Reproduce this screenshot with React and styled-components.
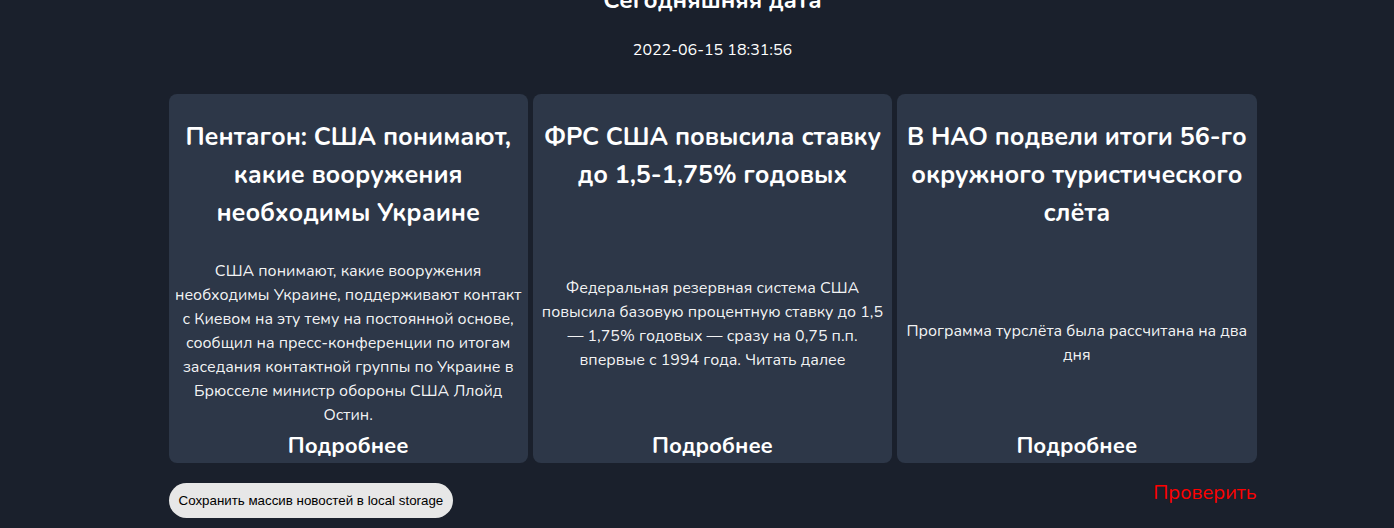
import React from "react";
import styled, { createGlobalStyle } from "styled-components";

const GlobalStyle = createGlobalStyle`
  *, *::before, *::after { box-sizing: border-box; }
  body {
    margin: 0;
    background: #1a202c;
    color: rgba(255, 255, 255, 0.96);
    font-family: Nunito, Lato, "Noto Sans", sans-serif;
    font-size: 16px;
    line-height: 24px;
  }
`;

const Page = styled.main`
  padding: 0 0 10px 31px;
`;

const Container = styled.div`
  width: 100%;
  max-width: 1088px;
  margin: 0 auto;
`;

const DateBlock = styled.header`
  margin-top: -18px;
  padding-bottom: 32px;
  text-align: center;
  color: #fff;
`;

const DateTitle = styled.h2`
  margin: 0 0 20px;
  font-size: 24px;
  line-height: 36px;
  font-weight: 700;
`;

const CurrentDate = styled.time`
  display: block;
`;

const NewsGrid = styled.section`
  display: grid;
  grid-template-columns: repeat(3, 1fr);
  gap: 5px;
`;

const NewsCard = styled.article`
  display: flex;
  flex-direction: column;
  justify-content: space-between;
  padding: 24px 5px 0;
  border-radius: 8px;
  background: #2d3748;
  text-align: center;
`;

const NewsTitle = styled.h2`
  margin: 0 0 27px;
  color: #fff;
  font-size: 25px;
  line-height: 38px;
  font-weight: 700;
`;

const NewsText = styled.p`
  margin: 0;
`;

const MoreLink = styled.a`
  padding-top: 2px;
  color: #fff;
  font-size: 22px;
  line-height: 34px;
  font-weight: 700;
  text-decoration: none;
`;

const Actions = styled.footer`
  display: flex;
  justify-content: space-between;
  align-items: flex-start;
  padding-top: 20px;
`;

const SaveButton = styled.button`
  height: 35px;
  padding: 0 10px;
  border: 0;
  border-radius: 18px;
  background: #e7e7e7;
  color: #000;
  font-family: "Liberation Sans", Arial, sans-serif;
  cursor: pointer;
`;

const CheckLink = styled.a`
  color: #ff0000;
  font-size: 20px;
  line-height: 20px;
  text-decoration: none;
`;

const news = [
  {
    title: "Пентагон: США понимают, какие вооружения необходимы Украине",
    text: "США понимают, какие вооружения необходимы Украине, поддерживают контакт с Киевом на эту тему на постоянной основе, сообщил на пресс-конференции по итогам заседания контактной группы по Украине в Брюсселе министр обороны США Ллойд Остин.",
  },
  {
    title: "ФРС США повысила ставку до 1,5-1,75% годовых",
    text: "Федеральная резервная система США повысила базовую процентную ставку до 1,5 — 1,75% годовых — сразу на 0,75 п.п. впервые с 1994 года. Читать далее",
  },
  {
    title: "В НАО подвели итоги 56-го окружного туристического слёта",
    text: "Программа турслёта была рассчитана на два дня",
  },
];

export default function App() {
  return (
    <>
      <GlobalStyle />
      <Page>
        <Container>
          <DateBlock>
            <DateTitle>Сегодняшняя дата</DateTitle>
            <CurrentDate dateTime="2022-06-15T18:31:56">2022-06-15 18:31:56</CurrentDate>
          </DateBlock>
          <NewsGrid>
            {news.map((item) => (
              <NewsCard key={item.title}>
                <NewsTitle>{item.title}</NewsTitle>
                <NewsText>{item.text}</NewsText>
                <MoreLink href="#">Подробнее</MoreLink>
              </NewsCard>
            ))}
          </NewsGrid>
          <Actions>
            <SaveButton type="button">Сохранить массив новостей в local storage</SaveButton>
            <CheckLink href="#">Проверить</CheckLink>
          </Actions>
        </Container>
      </Page>
    </>
  );
}
